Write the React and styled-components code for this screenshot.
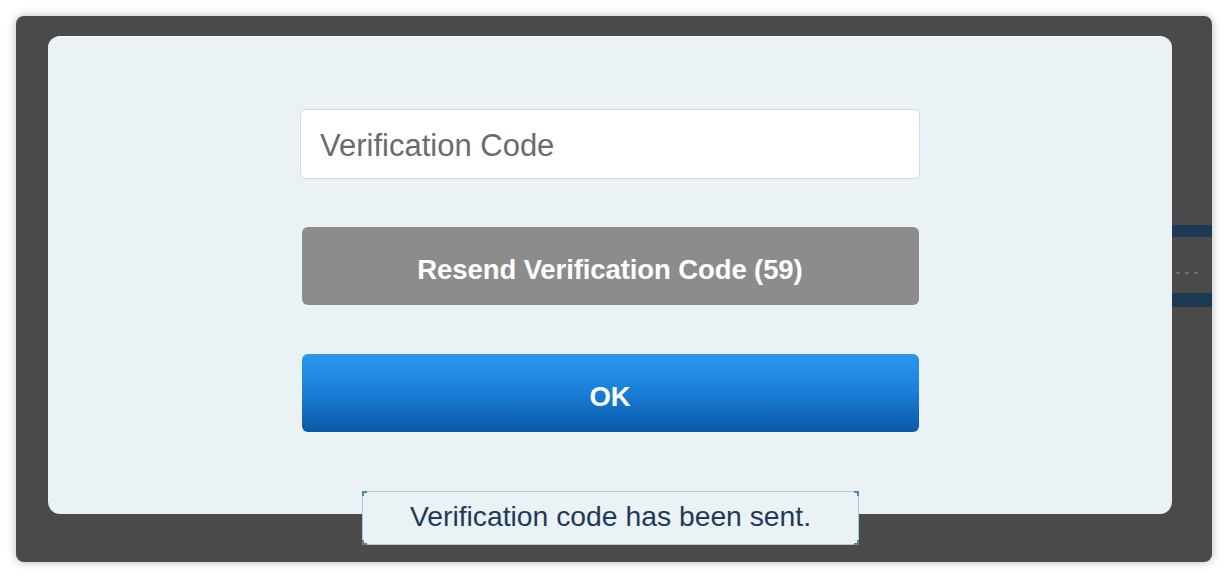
import React from "react";
import styled, { createGlobalStyle } from "styled-components";

const Global = createGlobalStyle`
  html, body { margin: 0; padding: 0; background: #ffffff; }
  body { font-family: "Liberation Sans", Arial, sans-serif; }
  * { box-sizing: border-box; }
`;

const Page = styled.div`
  width: 1228px;
  height: 578px;
  padding: 16px;
`;

const Frame = styled.div`
  position: relative;
  width: 1196px;
  height: 546px;
  background: #4a4a4a;
  border-radius: 8px;
  box-shadow: 0 0 10px rgba(0, 0, 0, 0.28);
  display: flex;
  padding: 20px 0 48px 32px;
`;

const Panel = styled.div`
  width: 1124px;
  height: 478px;
  background: #eaf2f5;
  border-radius: 12px;
  border-top: 1px solid #f6fbfc;
  display: flex;
  flex-direction: column;
  align-items: center;
  padding-top: 72px;
  gap: 48px;
`;

const Side = styled.div`
  flex: 1;
  display: flex;
  flex-direction: column;
  padding-top: 189px;
`;

const SideBar = styled.div`
  height: ${(p) => p.$h}px;
  background: #1d3a55;
  margin-bottom: ${(p) => p.$mb}px;
`;

const Dots = styled.div`
  margin: 0 0 0 4px;
  height: 2px;
  width: 22px;
  background: repeating-linear-gradient(90deg, #6e6e6e 0 4px, transparent 4px 9px);
  margin-bottom: 19px;
`;

const Input = styled.input`
  width: 620px;
  height: 70px;
  background: #ffffff;
  border: 1px solid #d6dadc;
  border-radius: 5px;
  padding: 4px 19px 0;
  font-family: "Liberation Sans", Arial, sans-serif;
  font-size: 31px;
  color: #333;
  outline: none;
  &::placeholder { color: #6b6b6b; }
`;

const Button = styled.button`
  width: 617px;
  height: 78px;
  margin-top: ${(p) => p.$mt || 0}px;
  border: none;
  border-radius: 6px;
  padding: 8px 0 0;
  font-family: "Liberation Sans", Arial, sans-serif;
  font-weight: bold;
  font-size: 27.5px;
  color: #ffffff;
  letter-spacing: -0.1px;
  background: ${(p) =>
    p.$primary
      ? "linear-gradient(180deg, #2b97ee 0%, #1a7dd6 50%, #0a58a8 100%)"
      : "#8c8c8c"};
  cursor: pointer;
`;

const Toast = styled.div`
  position: absolute;
  left: 346px;
  top: 475px;
  width: 497px;
  height: 54px;
  background: #eaf2f5;
  border: 1px solid #aec8d4;
  display: flex;
  align-items: center;
  justify-content: center;
  font-size: 28.3px;
  color: #1e3a5a;
  padding-bottom: 4px;
`;

const Corner = styled.span`
  position: absolute;
  width: 5px;
  height: 5px;
  border-color: #4d87a3;
  border-style: solid;
  border-width: 0;
  ${(p) => (p.$t ? "top: -1px;" : "bottom: -1px;")}
  ${(p) => (p.$l ? "left: -1px;" : "right: -1px;")}
  ${(p) => (p.$t ? "border-top-width: 2px;" : "border-bottom-width: 2px;")}
  ${(p) => (p.$l ? "border-left-width: 2px;" : "border-right-width: 2px;")}
`;

export default function App() {
  return (
    <>
      <Global />
      <Page>
        <Frame>
          <Panel>
            <Input placeholder="Verification Code" />
            <Button>Resend Verification Code (59)</Button>
            <Button $primary $mt={1}>OK</Button>
          </Panel>
          <Side>
            <SideBar $h={12} $mb={35} />
            <Dots />
            <SideBar $h={14} $mb={0} />
          </Side>
          <Toast>
            <Corner $t $l />
            <Corner $t />
            <Corner $l />
            <Corner />
            Verification code has been sent.
          </Toast>
        </Frame>
      </Page>
    </>
  );
}
